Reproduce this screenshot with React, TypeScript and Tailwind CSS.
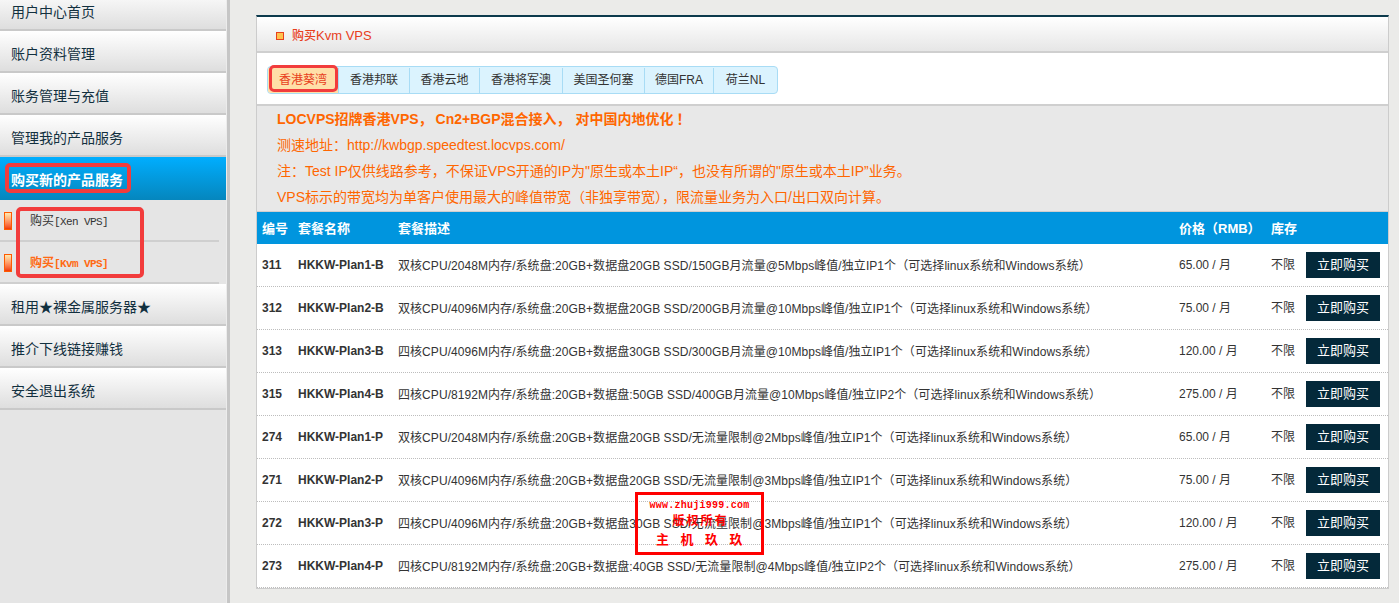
import React from "react";

const sans = "font-['Liberation_Sans','Noto_Sans_CJK_SC',sans-serif]";

const plans = [
  ["311", "HKKW-Plan1-B", "双核CPU/2048M内存/系统盘:20GB+数据盘20GB SSD/150GB月流量@5Mbps峰值/独立IP1个（可选择linux系统和Windows系统）", "65.00"],
  ["312", "HKKW-Plan2-B", "双核CPU/4096M内存/系统盘:20GB+数据盘20GB SSD/200GB月流量@10Mbps峰值/独立IP1个（可选择linux系统和Windows系统）", "75.00"],
  ["313", "HKKW-Plan3-B", "四核CPU/4096M内存/系统盘:20GB+数据盘30GB SSD/300GB月流量@10Mbps峰值/独立IP1个（可选择linux系统和Windows系统）", "120.00"],
  ["315", "HKKW-Plan4-B", "四核CPU/8192M内存/系统盘:20GB+数据盘:50GB SSD/400GB月流量@10Mbps峰值/独立IP2个（可选择linux系统和Windows系统）", "275.00"],
  ["274", "HKKW-Plan1-P", "双核CPU/2048M内存/系统盘:20GB+数据盘20GB SSD/无流量限制@2Mbps峰值/独立IP1个（可选择linux系统和Windows系统）", "65.00"],
  ["271", "HKKW-Plan2-P", "双核CPU/4096M内存/系统盘:20GB+数据盘20GB SSD/无流量限制@3Mbps峰值/独立IP1个（可选择linux系统和Windows系统）", "75.00"],
  ["272", "HKKW-Plan3-P", "四核CPU/4096M内存/系统盘:20GB+数据盘30GB SSD/无流量限制@3Mbps峰值/独立IP1个（可选择linux系统和Windows系统）", "120.00"],
  ["273", "HKKW-Plan4-P", "四核CPU/8192M内存/系统盘:20GB+数据盘:40GB SSD/无流量限制@4Mbps峰值/独立IP2个（可选择linux系统和Windows系统）", "275.00"],
];

const tabs = ["香港邦联", "香港云地", "香港将军澳", "美国圣何塞", "德国FRA", "荷兰NL"];
const tabWidths = ["w-[71px]", "w-[70px]", "w-[83px]", "w-[82px]", "w-[69px]", "w-[64px]"];

const MenuItem = ({ label }: { label: string }) => (
  <div className="flex h-[42px] items-center border-b-2 border-[#c9c9c9] bg-gradient-to-b from-white to-[#dedede] pl-[11px] pt-[6px] text-[14px] text-[#12303f]">
    {label}
  </div>
);

const SubItem = ({ label, tag, active }: { label: string; tag: string; active?: boolean }) => (
  <div className="relative flex h-[42px] items-center">
    <div className="ml-[4px] h-[18px] w-[8px] border border-[#ff5a00] bg-gradient-to-b from-[#ffe9b0] to-[#f03800]" />
    <div className={`ml-[18px] ${active ? "-mt-[3px] font-bold text-[#ff6a13]" : "-mt-[2px] text-[#333333]"}`}>
      <span className="text-[12px]">{label}</span>
      <span className="font-['Liberation_Mono',monospace] text-[11px] tracking-[-0.6px]">{tag}</span>
    </div>
    <div className="absolute bottom-0 left-0 h-[2px] w-[219px] bg-[#cfcfcf]" />
  </div>
);

const Sidebar = () => (
  <aside className="relative w-[226px] shrink-0 bg-[#e5e5e5]">
    <div className="-mt-[11px]">
      <MenuItem label="用户中心首页" />
      <MenuItem label="账户资料管理" />
      <MenuItem label="账务管理与充值" />
      <MenuItem label="管理我的产品服务" />
    </div>
    <div className="flex h-[43px] items-center bg-gradient-to-b from-[#00aeff] to-[#0586bd] pl-[11px] pt-[4px] text-[14px] font-bold text-white">
      购买新的产品服务
    </div>
    <SubItem label="购买" tag="[Xen VPS]" />
    <SubItem label="购买" tag="[Kvm VPS]" active />
    <MenuItem label="租用★裸金属服务器★" />
    <MenuItem label="推介下线链接赚钱" />
    <MenuItem label="安全退出系统" />
    <div className="absolute left-[5px] top-[163px] h-[30px] w-[126px] rounded-[5px] border-[4px] border-[#f23c3c]" />
    <div className="absolute left-[16px] top-[207px] h-[71px] w-[128px] rounded-[5px] border-[4px] border-[#f23c3c]" />
  </aside>
);

const PlanRow = ({ plan }: { plan: string[] }) => (
  <div className="flex h-[43px] items-center border-b border-dotted border-[#bdbdbd] text-[12px] text-[#333333]">
    <div className="w-[41px] pl-[5px] font-bold">{plan[0]}</div>
    <div className="w-[100px] font-bold">{plan[1]}</div>
    <div className="w-[781px] whitespace-nowrap pt-[1px] tracking-[0.06px]">{plan[2]}</div>
    <div className="w-[92px]">{plan[3]} / 月</div>
    <div className="w-[35px]">不限</div>
    <button className="h-[26px] w-[74px] bg-[#04293a] text-[13px] text-white">立即购买</button>
  </div>
);

export default function App() {
  return (
    <div className={`flex h-[603px] w-[1399px] overflow-hidden bg-[#ebebe9] ${sans}`}>
      <Sidebar />
      <div className="w-[4px] shrink-0 border-l border-[#ececec] bg-[#c6c6c6]" />
      <main className="relative ml-[26px] mt-[15px] h-[574px] w-[1133px] shrink-0 border-x border-b border-[#cccccc] border-t-[2px] border-t-[#0c3a4c] bg-white">
        <div className="flex h-[36px] items-center border-b-2 border-[#cfcfcf] bg-gradient-to-b from-white to-[#e6e6e6] pl-[19px] pt-[4px] font-medium text-[#e8401c]">
          <span className="mr-[8px] h-[8px] w-[8px] border border-[#e8401c] bg-[#ffc24d]" />
          <span className="text-[12px]">购买</span>
          <span className="text-[13px]">Kvm VPS</span>
        </div>
        <div className="relative flex h-[51px] items-center pl-[10px] pt-[2px]">
          <div className="flex h-[28px] items-stretch overflow-hidden rounded-[4px] border border-[#a8dcf5] bg-[#dbf3fe] pt-[1px] text-[12px] text-[#333333]">
            <div className="flex w-[70px] items-center justify-center bg-[#ffdfa8] text-[#e8401c]">香港葵湾</div>
            {tabs.map((tab, i) => (
              <div key={tab} className={`flex items-center justify-center border-l border-[#a8dcf5] ${tabWidths[i]}`}>
                {tab}
              </div>
            ))}
          </div>
          <div className="absolute left-[12px] top-[12px] h-[27px] w-[69px] rounded-[5px] border-[3px] border-[#f23c3c]" />
        </div>
        <div className="h-[107px] border-t-2 border-[#cfcfcf] bg-[#e8e8e8] pl-[20px] text-[14px] leading-[26px] text-[#ff6600]">
          <div className="font-bold">
            LOCVPS招牌香港VPS<span className="mr-[3px]">，</span>Cn2+BGP混合接入<span className="mr-[5px]">，</span>对中国内地优化<span className="ml-[3px]">！</span>
          </div>
          <div>测速地址：http://kwbgp.speedtest.locvps.com/</div>
          <div>注：Test IP仅供线路参考，不保证VPS开通的IP为"原生或本土IP“，也没有所谓的"原生或本土IP”业务。</div>
          <div>VPS标示的带宽均为单客户使用最大的峰值带宽（非独享带宽），限流量业务为入口/出口双向计算。</div>
        </div>
        <div className="flex h-[33px] items-center border-t border-[#cfcfcf] bg-[#0095de] pt-[1px] text-[13px] font-bold text-white">
          <div className="w-[41px] pl-[5px]">编号</div>
          <div className="w-[100px]">套餐名称</div>
          <div className="w-[781px]">套餐描述</div>
          <div className="w-[92px]">价格（RMB）</div>
          <div className="w-[35px]">库存</div>
        </div>
        {plans.map((plan) => (
          <PlanRow key={plan[0]} plan={plan} />
        ))}
        <div className="absolute left-[378px] top-[475px] flex h-[63px] w-[129px] flex-col items-center border-[3px] border-[#ff0000] font-bold text-[#ff0000]">
          <div className="mt-[5px] font-['Liberation_Mono',monospace] text-[10px] leading-[12px] tracking-[0.25px]">www.zhuji999.com</div>
          <div className="mt-[2px] pl-[2px] text-[12px] leading-[14px] tracking-[2px]">版权所有</div>
          <div className="mt-[4px] pl-[11px] text-[13px] leading-[16px] tracking-[11.5px]">主机玖玖</div>
        </div>
      </main>
    </div>
  );
}
